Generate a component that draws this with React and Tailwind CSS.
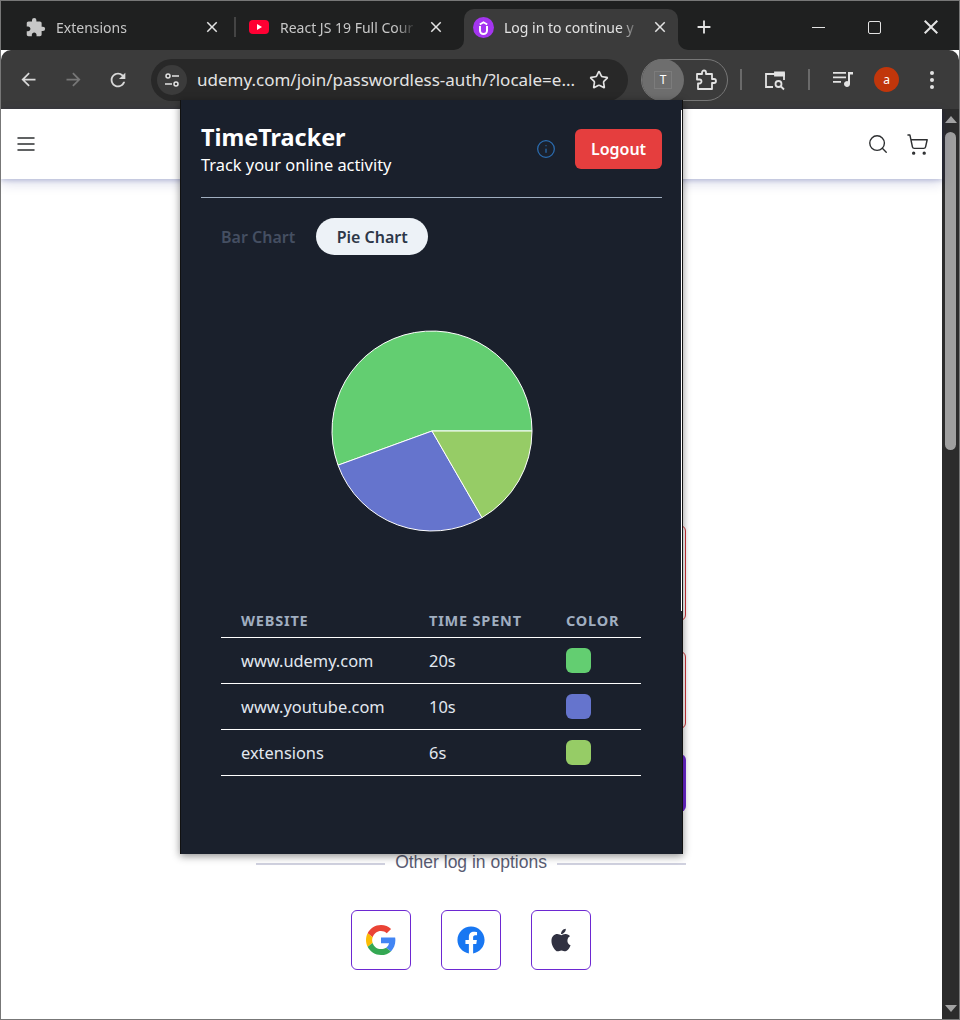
import { MdArrowBack, MdArrowForward, MdRefresh, MdClose, MdAdd, MdExtension } from 'react-icons/md'
import { FaFacebook, FaApple } from 'react-icons/fa'
import { LuStar, LuInfo, LuMenu, LuSearch, LuShoppingCart } from 'react-icons/lu'

const rows = [
  { site: 'www.udemy.com', time: '20s', color: 'bg-[#63ce71]' },
  { site: 'www.youtube.com', time: '10s', color: 'bg-[#6574cd]' },
  { site: 'extensions', time: '6s', color: 'bg-[#96cc66]' },
]

const GoogleLogo = () => (
  <svg width="30" height="30" viewBox="0 0 48 48">
    <path fill="#ea4335" d="M24 9.500c3.500 0 6.700 1.200 9.200 3.600l6.900-6.900C35.900 2.400 30.500 0 24 0 14.600 0 6.500 5.400 2.600 13.200l8 6.200C12.500 13.700 17.800 9.500 24 9.500z" />
    <path fill="#4285f4" d="M47 24.500c0-1.600-.1-3.100-.4-4.500H24v9h12.900c-.6 3-2.200 5.500-4.700 7.200l7.700 6C44.400 38 47 31.800 47 24.500z" />
    <path fill="#fbbc05" d="M10.600 28.600c-.5-1.500-.8-3-.8-4.600s.3-3.100.8-4.600l-8-6.200C.9 16.500 0 20.100 0 24s.9 7.500 2.600 10.800l8-6.200z" />
    <path fill="#34a853" d="M24 48c6.500 0 11.900-2.100 15.900-5.800l-7.700-6c-2.200 1.400-4.900 2.300-8.200 2.300-6.200 0-11.500-4.200-13.400-9.900l-8 6.200C6.500 42.600 14.600 48 24 48z" />
  </svg>
)

const UdemyIcon = () => (
  <svg width="21" height="21" viewBox="0 0 21 21">
    <circle cx="10.500" cy="10.500" r="10.500" fill="#a435f0" />
    <path d="M7 9v4.500a3.500 3.500 0 0 0 7 0V9" fill="none" stroke="#fff" strokeWidth="2" />
    <path d="M6.800 7.500l3.700-2.300 3.700 2.300" fill="none" stroke="#fff" strokeWidth="1.800" />
  </svg>
)

const Tab = ({ icon, title, active }) => (
  <div className={`relative flex h-[41px] w-[214px] shrink-0 items-center pb-[5px] pl-[8px] ${active ? 'rounded-t-[10px] bg-[#3b3b3b]' : ''}`}>
    {active && (
      <>
        <span className="absolute bottom-0 -left-[10px] h-[10px] w-[10px] bg-[#3b3b3b]">
          <span className="block h-full w-full rounded-br-[10px] bg-[#1f2020]" />
        </span>
        <span className="absolute -right-[10px] bottom-0 h-[10px] w-[10px] bg-[#3b3b3b]">
          <span className="block h-full w-full rounded-bl-[10px] bg-[#1f2020]" />
        </span>
      </>
    )}
    <span className="flex w-[22px] shrink-0 justify-center">{icon}</span>
    <span className={`ml-[10px] w-[136px] overflow-hidden text-[14px] whitespace-nowrap [mask-image:linear-gradient(to_right,black_85%,transparent)] ${active ? 'text-[#e3e3e3]' : 'text-[#c7c7c7]'}`}>{title}</span>
    <MdClose className="absolute top-[9px] right-[9px] text-[#e3e3e3]" size={18} />
  </div>
)

const Pie = () => (
  <svg width="202" height="202" viewBox="-101 -101 202 202">
    <path d="M0 0 L100 0 A100 100 0 1 0 -93.97 34.2 Z" fill="#63ce71" stroke="#fff" />
    <path d="M0 0 L-93.97 34.2 A100 100 0 0 0 50 86.6 Z" fill="#6574cd" stroke="#fff" />
    <path d="M0 0 L50 86.6 A100 100 0 0 0 100 0 Z" fill="#96cc66" stroke="#fff" />
  </svg>
)

const Popup = () => (
  <div className="absolute top-[99px] left-[179px] z-10 h-[754px] w-[503px] border-r border-l border-[#111] bg-[#1a202c] px-5 pt-5 text-white shadow-[0_2px_8px_rgba(0,0,0,0.45)]">
    <span className="absolute top-[10px] right-0 h-[501px] w-px bg-white" />
    <div className="flex h-[78px] items-start justify-between border-b border-[#a0aec0]">
      <div>
        <div className="text-[23.4px] leading-[34px] font-bold">TimeTracker</div>
        <div className="text-[16.4px] leading-[22px]">Track your online activity</div>
      </div>
      <div className="mt-[9px] flex items-center gap-[19px]">
        <LuInfo className="text-[#2b6cb0]" size={20} strokeWidth={1.5} />
        <button className="h-10 w-[87px] rounded-md bg-[#e53e3e] text-[16px] font-semibold">Logout</button>
      </div>
    </div>
    <div className="mt-5 flex items-center gap-[21px] pl-5 text-[16px] font-semibold">
      <span className="text-[#454f62]">Bar Chart</span>
      <span className="flex h-[37px] w-[112px] items-center justify-center rounded-full bg-[#edf2f7] text-[#2d3748]">Pie Chart</span>
    </div>
    <div className="mt-[75px] flex justify-center">
      <Pie />
    </div>
    <table className="mt-[74px] ml-5 w-[420px] table-fixed text-left">
      <thead>
        <tr className="h-[31px] border-b border-white text-[14.5px] font-bold tracking-[0.8px] text-[#a0aec0] uppercase">
          <th className="w-[188px] pl-5 font-bold">Website</th>
          <th className="w-[137px] pl-5 font-bold">Time Spent</th>
          <th className="pl-5 font-bold">Color</th>
        </tr>
      </thead>
      <tbody>
        {rows.map(row => (
          <tr key={row.site} className="h-[46px] border-b border-white text-[16.4px] text-[#e2e8f0]">
            <td className="pt-[3px] pl-5">{row.site}</td>
            <td className="pt-[3px] pl-5">{row.time}</td>
            <td className="pl-5">
              <div className={`h-[25px] w-[25px] rounded-md ${row.color}`} />
            </td>
          </tr>
        ))}
      </tbody>
    </table>
  </div>
)

const Toolbar = () => (
  <div className="flex h-[59px] items-center rounded-t-[10px] bg-[#3b3b3b] pl-[17px]">
    <MdArrowBack className="text-[#d8d8d8]" size={21} />
    <MdArrowForward className="ml-6 text-[#777]" size={21} />
    <MdRefresh className="ml-[23px] text-[#d8d8d8]" size={22} />
    <div className="ml-[22px] flex h-[42px] w-[477px] items-center rounded-full bg-[#282828] pr-[19px] pl-[6px]">
      <span className="flex h-[30px] w-[30px] items-center justify-center rounded-full bg-[#3b3b3b]">
        <svg width="16" height="16" viewBox="0 0 16 16" fill="none" stroke="#e3e3e3" strokeWidth="1.500">
          <circle cx="4" cy="4" r="2" />
          <path d="M8 4h7M1 12h7" />
          <circle cx="12" cy="12" r="2" />
        </svg>
      </span>
      <span className="ml-[10px] flex-1 text-[17px] whitespace-nowrap text-[#e3e3e3]">udemy.com/join/passwordless-auth/?locale=e...</span>
      <LuStar className="text-[#e3e3e3]" size={20} />
    </div>
    <div className="relative ml-[13px] flex h-[42px] w-[87px] items-center rounded-full border border-[#777]">
      <span className="flex h-[42px] w-[42px] items-center justify-center rounded-full bg-[#6e6e6e] text-[12px] text-white">
        <span className="flex h-[18px] w-[18px] items-center justify-center border border-[#7c7c7c]">T</span>
      </span>
      <svg className="ml-[11px]" width="22" height="22" viewBox="0 0 22 22" fill="none" stroke="#e3e3e3" strokeWidth="1.800" strokeLinejoin="round">
        <path d="M2 5h5V3.500a2 2 0 0 1 4 0V5h6v5h2a2 2 0 0 1 0 4h-2v6H3v-5.500h1.500a2 2 0 0 0 0-4H2z" />
      </svg>
    </div>
    <span className="ml-3 h-[21px] w-0.5 bg-[#6a6a6a]" />
    <svg className="ml-[21px]" width="24" height="24" viewBox="0 0 24 24" fill="none" stroke="#e3e3e3" strokeWidth="1.800">
      <path d="M10 19H3V6h18v6" />
      <path d="M12 4.500h9v3h-9z" fill="#e3e3e3" />
      <circle cx="15.500" cy="16" r="3" />
      <path d="M18 18.500l3 3" />
    </svg>
    <span className="ml-[21px] h-[21px] w-0.5 bg-[#6a6a6a]" />
    <svg className="ml-[22px]" width="22" height="22" viewBox="0 0 22 22" fill="#e3e3e3">
      <path d="M1 3h13v1.800H1zM1 7.500h13v1.800H1zM1 12h8v1.800H1z" />
      <path d="M16 3h5v2.500h-3V15a3 3 0 1 1-2-2.800z" />
    </svg>
    <span className="ml-5 flex h-[25px] w-[25px] items-center justify-center rounded-full bg-[#c1360b] text-[12px] text-white">a</span>
    <svg className="ml-[25px]" width="16" height="20" viewBox="0 0 16 20" fill="#e3e3e3">
      <circle cx="8" cy="3" r="2" />
      <circle cx="8" cy="10" r="2" />
      <circle cx="8" cy="17" r="2" />
    </svg>
  </div>
)

export default function App() {
  return (
    <div className="relative h-[1020px] w-[960px] overflow-hidden border border-[#777] bg-white font-['Noto_Sans',sans-serif]">
      <div className="flex h-[49px] items-end bg-[#1f2020] pl-[15px] text-white">
        <Tab icon={<MdExtension className="text-[#c7c7c7]" size={21} />} title="Extensions" />
        <span className="mx-1 mb-[13px] h-[20px] w-0.5 self-end bg-[#444]" />
        <Tab
          icon={
            <svg width="20" height="14" viewBox="0 0 20 14">
              <rect width="20" height="14" rx="4" fill="#ff0033" />
              <path d="M8 4l5 3-5 3z" fill="#fff" />
            </svg>
          }
          title="React JS 19 Full Cour"
        />
        <span className="w-[10px]" />
        <Tab active icon={<UdemyIcon />} title="Log in to continue y" />
        <MdAdd className="mb-[12px] ml-[15px] text-[#e3e3e3]" size={22} />
        <div className="mb-[11px] ml-auto flex items-center pr-[16px] text-[#e3e3e3]">
          <span className="h-px w-[13px] bg-[#e3e3e3]" />
          <span className="ml-[43px] h-[13px] w-[13px] rounded-[2px] border border-[#e3e3e3]" />
          <MdClose className="ml-[38px]" size={24} />
        </div>
      </div>
      <Toolbar />
      <div className="flex h-[910px]">
        <div className="flex-1">
          <header className="relative flex h-[70px] items-center justify-between pr-[13px] pl-[13px] text-[#2d2f31] shadow-[0_2px_4px_rgba(6,17,118,0.16),0_4px_12px_rgba(6,17,118,0.16)]">
            <LuMenu size={24} strokeWidth={1.5} />
            <div className="flex items-center gap-[17px]">
              <LuSearch size={22} strokeWidth={1.5} />
              <LuShoppingCart size={23} strokeWidth={1.5} />
            </div>
          </header>
          <div className="mt-[346px] ml-[255px] flex w-[430px] flex-col">
            <div className="h-[96px] rounded-md border border-[#d1353a]" />
            <div className="mt-[30px] h-[78px] rounded-md border border-[#d1353a]" />
            <div className="mt-[25px] h-[58px] rounded-md bg-[#6d28d2]" />
            <div className="mt-[37px] flex items-center gap-[10px] font-['Liberation_Sans',sans-serif] text-[17.5px] text-[#595c73]">
              <span className="mt-[4px] h-[2px] flex-1 bg-[#d1d2e0]" />
              <span>Other log in options</span>
              <span className="mt-[4px] h-[2px] flex-1 bg-[#d1d2e0]" />
            </div>
            <div className="mt-[35px] flex justify-center gap-[30px]">
              <span className="flex h-[60px] w-[60px] items-center justify-center rounded-md border border-[#6d28d2]"><GoogleLogo /></span>
              <span className="flex h-[60px] w-[60px] items-center justify-center rounded-md border border-[#6d28d2]"><FaFacebook className="text-[#1877f2]" size={28} /></span>
              <span className="flex h-[60px] w-[60px] items-center justify-center rounded-md border border-[#6d28d2]"><FaApple className="text-[#303141]" size={26} /></span>
            </div>
          </div>
        </div>
        <div className="flex w-[17px] flex-col items-center bg-[#2c2c2c] pt-[7px]">
          <span className="h-0 w-0 border-x-[6px] border-b-[7px] border-x-transparent border-b-[#a3a3a3]" />
          <span className="mt-[9px] h-[318px] w-[11px] rounded-full bg-[#9f9f9f]" />
          <span className="mt-auto mb-[7px] h-0 w-0 border-x-[6px] border-t-[7px] border-x-transparent border-t-[#a3a3a3]" />
        </div>
      </div>
      <Popup />
    </div>
  )
}
